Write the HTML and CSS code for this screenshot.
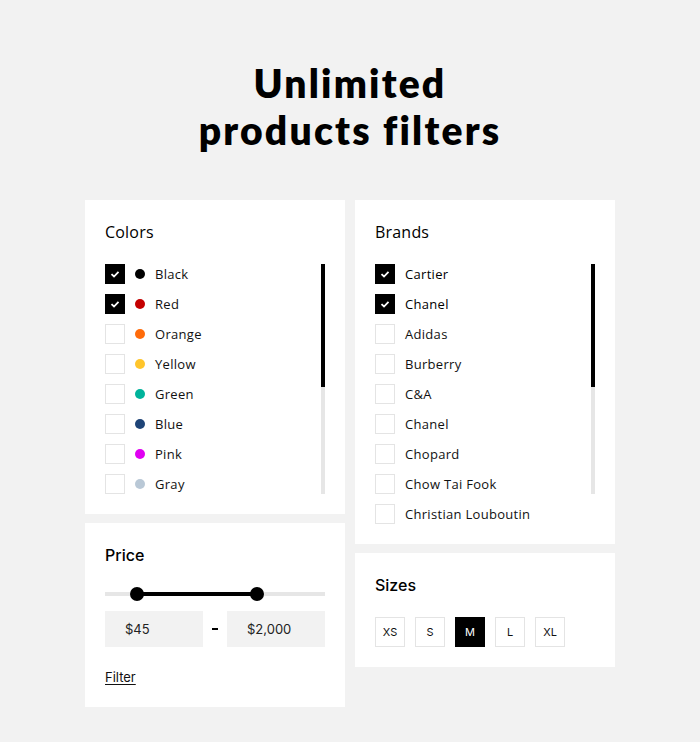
FILE: index.html
```html
<!DOCTYPE html>
<html lang="en">
<head>
<meta charset="utf-8">
<title>Unlimited products filters</title>
<link rel="stylesheet" href="styles.css">
</head>
<body>
<main class="page">
  <h1 class="title"><span class="line">Unlimited</span><span class="line">products filters</span></h1>
  <div class="grid">
    <div class="col">
      <section class="card">
        <h2 class="card-title">Colors</h2>
        <div class="list">
          <label class="row"><span class="box checked"><svg viewBox="0 0 10 10" width="10" height="10"><path d="M1.5 5.2 L4 7.5 L8.5 2.8" fill="none" stroke="#fff" stroke-width="1.8"/></svg></span><span class="dot" style="background:#000"></span><span class="text">Black</span></label>
          <label class="row"><span class="box checked"><svg viewBox="0 0 10 10" width="10" height="10"><path d="M1.5 5.2 L4 7.5 L8.5 2.8" fill="none" stroke="#fff" stroke-width="1.8"/></svg></span><span class="dot" style="background:#c40000"></span><span class="text">Red</span></label>
          <label class="row"><span class="box"></span><span class="dot" style="background:#ff6b0a"></span><span class="text">Orange</span></label>
          <label class="row"><span class="box"></span><span class="dot" style="background:#ffc52b"></span><span class="text">Yellow</span></label>
          <label class="row"><span class="box"></span><span class="dot" style="background:#00b39b"></span><span class="text">Green</span></label>
          <label class="row"><span class="box"></span><span class="dot" style="background:#1e4477"></span><span class="text">Blue</span></label>
          <label class="row"><span class="box"></span><span class="dot" style="background:#e000f2"></span><span class="text">Pink</span></label>
          <label class="row"><span class="box"></span><span class="dot" style="background:#b9c8d6"></span><span class="text">Gray</span></label>
          <div class="scroll"><div class="thumb"></div></div>
        </div>
      </section>
      <section class="card">
        <h2 class="card-title alt">Price</h2>
        <div class="slider">
          <div class="track"></div>
          <div class="fill"></div>
          <span class="handle h1"></span>
          <span class="handle h2"></span>
        </div>
        <div class="range">
          <div class="input">$45</div>
          <span class="dash"></span>
          <div class="input">$2,000</div>
        </div>
        <a class="filter" href="#">Filter</a>
      </section>
    </div>
    <div class="col">
      <section class="card">
        <h2 class="card-title">Brands</h2>
        <div class="list">
          <label class="row"><span class="box checked"><svg viewBox="0 0 10 10" width="10" height="10"><path d="M1.5 5.2 L4 7.5 L8.5 2.8" fill="none" stroke="#fff" stroke-width="1.8"/></svg></span><span class="text strong">Cartier</span></label>
          <label class="row"><span class="box checked"><svg viewBox="0 0 10 10" width="10" height="10"><path d="M1.5 5.2 L4 7.5 L8.5 2.8" fill="none" stroke="#fff" stroke-width="1.8"/></svg></span><span class="text strong">Chanel</span></label>
          <label class="row"><span class="box"></span><span class="text">Adidas</span></label>
          <label class="row"><span class="box"></span><span class="text">Burberry</span></label>
          <label class="row"><span class="box"></span><span class="text">C&amp;A</span></label>
          <label class="row"><span class="box"></span><span class="text">Chanel</span></label>
          <label class="row"><span class="box"></span><span class="text">Chopard</span></label>
          <label class="row"><span class="box"></span><span class="text">Chow Tai Fook</span></label>
          <label class="row"><span class="box"></span><span class="text">Christian Louboutin</span></label>
          <div class="scroll"><div class="thumb"></div></div>
        </div>
      </section>
      <section class="card">
        <h2 class="card-title alt">Sizes</h2>
        <div class="sizes">
          <span class="size">XS</span>
          <span class="size">S</span>
          <span class="size active">M</span>
          <span class="size">L</span>
          <span class="size">XL</span>
        </div>
      </section>
    </div>
  </div>
</main>
</body>
</html>
```
FILE: styles.css
```css
* { box-sizing: border-box; }
html, body { margin: 0; padding: 0; }
body {
  background: #f2f2f2;
  color: #111;
  font-family: "Open Sans", "Liberation Sans", sans-serif;
  width: 700px;
  height: 742px;
  overflow: hidden;
}
.page {
  display: flex;
  flex-direction: column;
  align-items: center;
  padding-top: 60px;
}
.title {
  margin: 0;
  display: flex;
  flex-direction: column;
  align-items: center;
  font-family: "Lato", sans-serif;
  font-weight: 800;
  text-align: center;
  color: #000;
}
.line {
  display: block;
  height: 47px;
  line-height: 47px;
  font-size: 39px;
  letter-spacing: 2.2px;
}
.grid {
  margin-top: 46px;
  display: grid;
  grid-template-columns: 260px 260px;
  column-gap: 10px;
  align-items: start;
}
.col {
  display: flex;
  flex-direction: column;
  gap: 9px;
}
.card {
  background: #fff;
  padding: 20px;
}
.card-title {
  margin: 0;
  font-size: 16px;
  font-weight: 500;
  line-height: 24px;
  letter-spacing: 0.2px;
  color: #000;
}
.card-title.alt {
  font-family: "Inter", sans-serif;
  letter-spacing: 0;
}
.list {
  position: relative;
  margin-top: 20px;
  display: flex;
  flex-direction: column;
  gap: 10px;
}
.row {
  display: flex;
  align-items: center;
  height: 20px;
  font-size: 13px;
  letter-spacing: 0.3px;
  color: #111;
}
.box {
  width: 20px;
  height: 20px;
  border: 1px solid #e4e4e4;
  display: flex;
  align-items: center;
  justify-content: center;
  flex: none;
}
.box.checked {
  background: #000;
  border-color: #000;
}
.dot {
  width: 10px;
  height: 10px;
  border-radius: 50%;
  margin-left: 10px;
  flex: none;
}
.text { margin-left: 10px; }
.text.strong { font-weight: 500; color: #000; }
.scroll {
  position: absolute;
  top: 0;
  right: 0;
  width: 4px;
  height: 230px;
  background: #e6e6e6;
}
.thumb {
  width: 4px;
  height: 123px;
  background: #000;
}
.slider {
  position: relative;
  margin-top: 20px;
  height: 14px;
}
.track {
  position: absolute;
  left: 0;
  right: 0;
  top: 5px;
  height: 4px;
  background: #e6e6e6;
}
.fill {
  position: absolute;
  left: 32px;
  width: 120px;
  top: 5px;
  height: 4px;
  background: #000;
}
.handle {
  position: absolute;
  top: 0;
  width: 14px;
  height: 14px;
  border-radius: 50%;
  background: #000;
}
.h1 { left: 25px; }
.h2 { left: 145px; }
.range {
  margin-top: 10px;
  display: flex;
  align-items: center;
  justify-content: space-between;
}
.input {
  width: 98px;
  height: 36px;
  background: #f2f2f2;
  padding-left: 20px;
  display: flex;
  align-items: center;
  font-family: "Inter", sans-serif;
  font-size: 13px;
  color: #222;
}
.dash {
  width: 6px;
  height: 2px;
  background: #000;
}
.filter {
  display: inline-block;
  margin-top: 21px;
  font-family: "Inter", sans-serif;
  font-size: 13px;
  line-height: 18px;
  color: #111;
  text-decoration: underline;
  text-underline-offset: 2px;
}
.sizes {
  margin-top: 20px;
  display: flex;
  gap: 10px;
}
.size {
  width: 30px;
  height: 30px;
  border: 1px solid #e4e4e4;
  display: flex;
  align-items: center;
  justify-content: center;
  font-family: "Inter", sans-serif;
  font-size: 11px;
  color: #111;
}
.size.active {
  background: #000;
  border-color: #000;
  color: #fff;
}
```
